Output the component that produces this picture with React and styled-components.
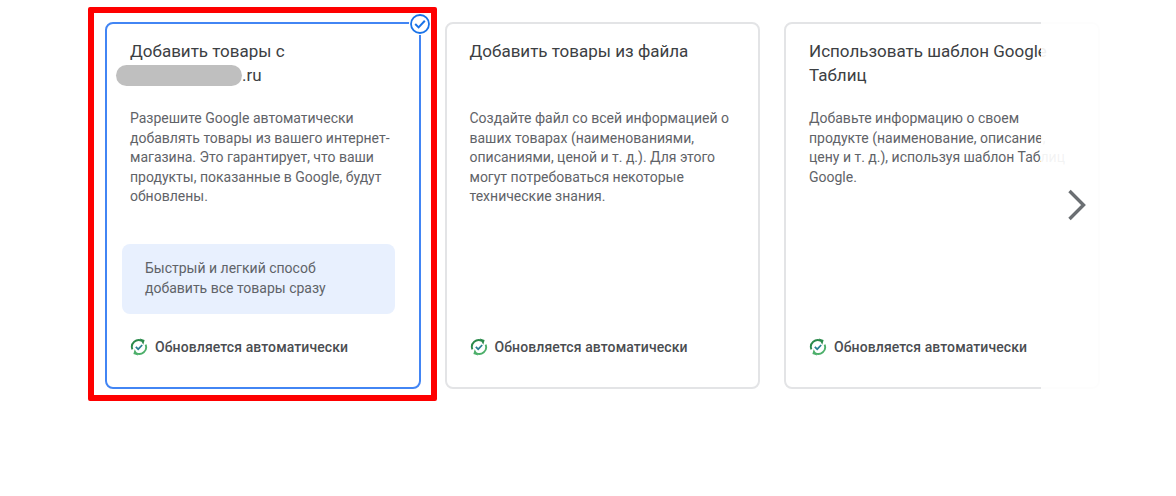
import styled, { createGlobalStyle } from "styled-components"

const GlobalStyle = createGlobalStyle`
    html, body {
        margin: 0;
        padding: 0;
        background: #fff;
        font-family: Roboto, "Liberation Sans", sans-serif;
    }
`

const cards = [
    {
        title: <>Добавить товары с<br /><Blur />.ru</>,
        text: "Разрешите Google автоматически добавлять товары из вашего интернет-магазина. Это гарантирует, что ваши продукты, показанные в Google, будут обновлены.",
        note: <>Быстрый и легкий способ<br />добавить все товары сразу</>,
        selected: true,
    },
    {
        title: "Добавить товары из файла",
        text: "Создайте файл со всей информацией о ваших товарах (наименованиями, описаниями, ценой и т. д.). Для этого могут потребоваться некоторые технические знания.",
    },
    {
        title: "Использовать шаблон Google Таблиц",
        text: "Добавьте информацию о своем продукте (наименование, описание, цену и т. д.), используя шаблон Таблиц Google.",
    },
]

function SyncIcon() {
    return (
        <svg width="18" height="18" viewBox="0 0 18 18" fill="none">
            <path d="M2.4 11.4A6.8 6.8 0 0 1 12 2.9" stroke="#2b8a4c" strokeWidth="1.9" />
            <path d="M9.8 0.6l4.8 1.3-1.3 4.8z" fill="#2b8a4c" />
            <path d="M15.6 6.6A6.8 6.8 0 0 1 6 15.1" stroke="#4caf6a" strokeWidth="1.9" />
            <path d="M8.2 17.4l-4.8-1.3 1.3-4.8z" fill="#4caf6a" />
            <path d="M5.8 8.8l2.4 2.4 4-4.2" stroke="#2a7f92" strokeWidth="1.7" />
        </svg>
    )
}

function CheckBadge() {
    return (
        <Badge>
            <svg width="22" height="22" viewBox="0 0 22 22" fill="none">
                <circle cx="11" cy="11" r="9" fill="#fff" stroke="#1a73e8" strokeWidth="1.8" />
                <path d="M6.2 11l3.4 3.4 6.2-6.6" stroke="#1a73e8" strokeWidth="2" />
            </svg>
        </Badge>
    )
}

export default function App() {
    return (
        <>
            <GlobalStyle />
            <Page>
                <Carousel>
                    {cards.map((card, i) => (
                        <Card key={i} $selected={card.selected}>
                            {card.selected && <RedFrame />}
                            {card.selected && <CheckBadge />}
                            <Title>{card.title}</Title>
                            <Text>{card.text}</Text>
                            {card.note && <Note>{card.note}</Note>}
                            <Footer>
                                <SyncIcon />
                                <span>Обновляется автоматически</span>
                            </Footer>
                        </Card>
                    ))}
                    <Fade />
                    <NextArrow>
                        <svg width="20" height="32" viewBox="0 0 20 32" fill="none">
                            <path d="M2.5 2l14 14-14 14" stroke="#6b6f73" strokeWidth="3.4" />
                        </svg>
                    </NextArrow>
                </Carousel>
            </Page>
        </>
    )
}

function Blur() {
    return <Pill />
}

const Page = styled.div`
    width: 1176px;
    height: 496px;
    padding: 22px 0 0 105px;
    box-sizing: border-box;
    overflow: hidden;
`
const Carousel = styled.div`
    position: relative;
    display: flex;
    gap: 24px;
    width: 994.5px;
`
const Card = styled.div`
    position: relative;
    box-sizing: border-box;
    flex: 0 0 315.5px;
    height: 367px;
    display: flex;
    flex-direction: column;
    padding: 16px 23px 31px 23px;
    border: 2px solid ${props => (props.$selected ? "#4285f4" : "#e3e4e6")};
    border-radius: 8px;
    background: #fff;
`
const RedFrame = styled.div`
    position: absolute;
    top: -17px;
    left: -19px;
    width: 337px;
    height: 382px;
    border: 6px solid #fe0000;
    border-radius: 2px;
    pointer-events: none;
`
const Badge = styled.div`
    position: absolute;
    top: -11px;
    right: -12px;
    width: 22px;
    height: 22px;
    background: #fff;
    border-radius: 50%;
`
const Title = styled.div`
    min-height: 47px;
    font-size: 17px;
    line-height: 23.5px;
    color: #3c4043;
`
const Pill = styled.span`
    display: inline-block;
    vertical-align: top;
    width: 126px;
    height: 21px;
    margin: 1px 0 0 -14px;
    border-radius: 11px;
    background: #bfbfbf;
`
const Text = styled.p`
    margin: 22px 0 0;
    font-size: 14px;
    line-height: 19.6px;
    color: #5f6368;
`
const Note = styled.div`
    margin: 37px 0 0 -8px;
    width: 273px;
    height: 70px;
    box-sizing: border-box;
    padding: 15px 23px;
    border-radius: 8px;
    background: #e8f0fe;
    font-size: 14px;
    line-height: 19.6px;
    color: #5f6368;
`
const Footer = styled.div`
    margin-top: auto;
    display: flex;
    align-items: center;
    gap: 7px;
    font-size: 14px;
    font-weight: 500;
    line-height: 18px;
    letter-spacing: 0.1px;
    color: #4a4d51;
`
const Fade = styled.div`
    position: absolute;
    top: 0;
    right: 0;
    bottom: 0;
    width: 58.5px;
    background: rgba(255, 255, 255, 0.92);
`
const NextArrow = styled.div`
    position: absolute;
    top: 167px;
    right: 13px;
    width: 20px;
    height: 32px;
`
